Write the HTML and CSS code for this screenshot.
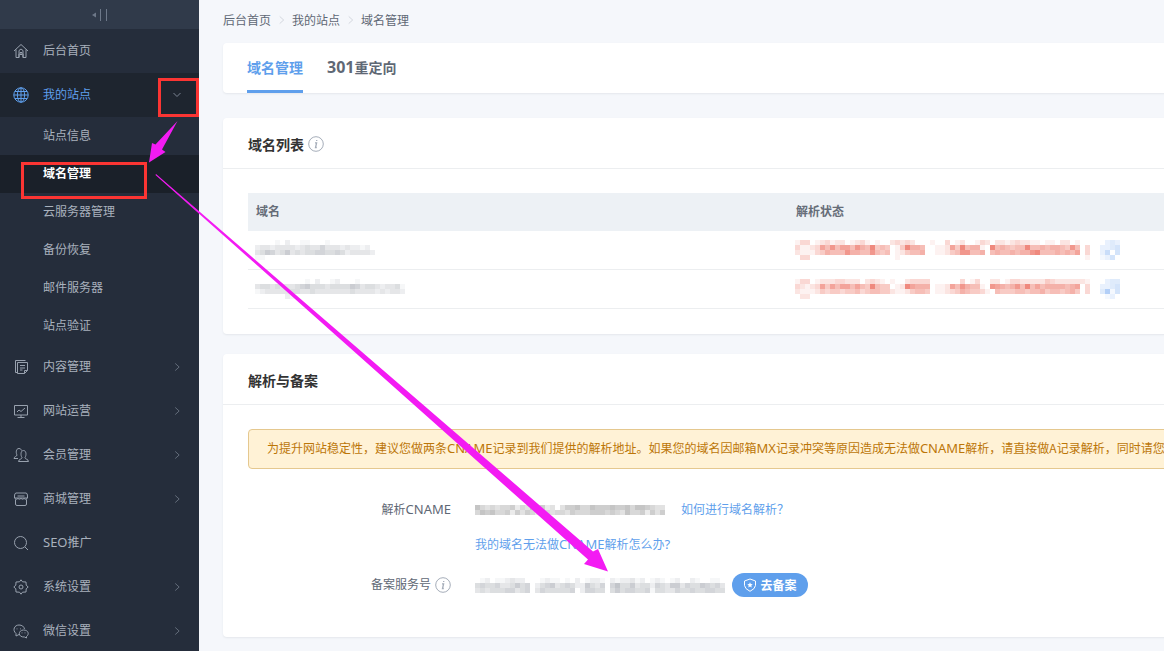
FILE: index.html
```html
<!DOCTYPE html>
<html lang="zh-CN">
<head>
<meta charset="utf-8">
<title>域名管理</title>
<link rel="stylesheet" href="styles.css">
</head>
<body>
<svg class="defs" aria-hidden="true">
  <symbol id="right" viewBox="0 0 12 14"><path d="M3.500 2 9 7l-5.500 5"/></symbol>
  <symbol id="info" viewBox="0 0 16 16"><circle cx="8" cy="8" r="7.300"/><path d="M7 6.800h1.600L7.500 11.500h1.300M8.700 4v1" stroke-width="1.300"/></symbol>
</svg>
<div class="app">
  <aside class="sidebar">
    <button class="collapse" type="button" aria-label="收起菜单">
      <svg width="16" height="12" viewBox="0 0 16 12"><path d="M4 3.500v5L0 6z" fill="#6d7889"/><path d="M8.500 0v12M14.500 0v12" stroke="#6d7889"/></svg>
    </button>
    <nav>
      <a class="item" href="#"><svg class="icon" viewBox="0 0 16 16"><path d="M1 8 8 1.500 15 8M3 6.500v8h3v-3.500M13 6.500v8h-3V11M6 14.500V7.500L8 6l2 1.500v7M7 9.500h2v2H7z"/></svg><span class="label">后台首页</span></a>
      <a class="item open" href="#"><svg class="icon" viewBox="0 0 16 16"><circle cx="8" cy="8" r="7.200"/><ellipse cx="8" cy="8" rx="3.600" ry="7.200"/><path d="M8 .8v14.400M.8 8h14.400M2 4.500h12M2 11.500h12"/></svg><span class="label">我的站点</span><svg class="chev-down" viewBox="0 0 12 14"><path d="M2.500 5 6 8.500 9.500 5"/></svg></a>
      <div class="submenu">
        <a class="sub" href="#">站点信息</a>
        <a class="sub current" href="#">域名管理</a>
        <a class="sub" href="#">云服务器管理</a>
        <a class="sub" href="#">备份恢复</a>
        <a class="sub" href="#">邮件服务器</a>
        <a class="sub" href="#">站点验证</a>
      </div>
      <a class="item" href="#"><svg class="icon" viewBox="0 0 16 16"><path d="M4.500 3.500h10v8l-3 3h-7zM14.500 11.500h-3v3M2.500 13.500v-12h10M4.500 13.500h-2M7 6.500h5M7 9h5M7 11h2.500"/></svg><span class="label">内容管理</span><svg class="chev"><use href="#right"/></svg></a>
      <a class="item" href="#"><svg class="icon" viewBox="0 0 16 16"><path d="M1.500 2.500h13v9.500h-13zM8 12v2.500M4.500 14.500h7M4 9l2-2 2 1.500L12 5"/></svg><span class="label">网站运营</span><svg class="chev"><use href="#right"/></svg></a>
      <a class="item" href="#"><svg class="icon" viewBox="0 0 16 16"><path d="M5 11.500H1c0-2 3-2 3-3.500C3 6.500 2.500 1.500 6 1.500c1.500 0 2.300 1 2.500 2M5.500 14.500c0-2.500 3.500-2 3.500-4C7.500 8.500 7.500 3.500 10.500 3.500s3 5 1.500 7c0 2 3.500 1.500 3.500 4z"/></svg><span class="label">会员管理</span><svg class="chev"><use href="#right"/></svg></a>
      <a class="item" href="#"><svg class="icon" viewBox="0 0 16 16"><path d="M3 2h10q1.500 0 1.500 3v2H1.500V5Q1.500 2 3 2zM4.500 5h7M2.500 8.500v4.500q0 1.500 1.500 1.500h8q1.500 0 1.500-1.500V8.500M1.500 7q1.500 2.500 3.500.500Q6 9 8 7.500q2 1.500 3 0 2 2 3.500-.5"/></svg><span class="label">商城管理</span><svg class="chev"><use href="#right"/></svg></a>
      <a class="item" href="#"><svg class="icon" viewBox="0 0 16 16"><circle cx="7.500" cy="7.500" r="6"/><path d="M12 12l3 3"/></svg><span class="label"><span class="latin">SEO</span>推广</span></a>
      <a class="item" href="#"><svg class="icon" viewBox="0 0 16 16"><path d="M8 .8 9.500 2.800 13 3l.2 3.200L15.200 8l-2 1.800L13 13l-3.500.2L8 15.200 6.500 13.200 3 13l-.2-3.200L.8 8l2-1.800L3 3l3.500-.2z"/><circle cx="8" cy="8" r="2"/></svg><span class="label">系统设置</span><svg class="chev"><use href="#right"/></svg></a>
      <a class="item" href="#"><svg class="icon" viewBox="0 0 16 16"><path d="M6 11.500 3 13v-2.500C-1 7 1.500 2 6 2c3 0 5 1.500 5.500 4M4 5.500v.8M7.500 5.500v.8"/><path d="M13.500 13.500V15l-2-1c-7 .5-6.500-7-1-7 5 0 6 4.500 3 6.500zM9 9.500v.8M12 9.500v.8"/></svg><span class="label">微信设置</span><svg class="chev"><use href="#right"/></svg></a>
    </nav>
  </aside>

  <main class="main">
    <nav class="crumbs" aria-label="面包屑">
      <a href="#">后台首页</a><svg class="sep"><use href="#right"/></svg><a href="#">我的站点</a><svg class="sep"><use href="#right"/></svg><a href="#">域名管理</a>
    </nav>

    <div class="card tabs">
      <a class="tab selected" href="#">域名管理</a>
      <a class="tab" href="#"><span class="digits">301</span>重定向</a>
    </div>

    <section class="card">
      <h2 class="title">域名列表<svg class="info"><use href="#info"/></svg></h2>
      <div class="body">
        <table class="table">
          <thead><tr><th>域名</th><th>解析状态</th></tr></thead>
          <tbody>
            <tr>
              <td><span class="mosaic grey" data-rows="000010200110001000000000 233233332343353332322120 346534634344554454233332 110000000000000000000000"></span></td>
              <td><span class="status"><span class="mosaic red" data-rows="13301231220123101002323200010030120013202212322110110220100 31123758577586594540149665001127495661095654559556566548503 21113465558665585450124556001124588556056556566895556565703 03300000000000000000100000000000000000000000000000000000001"></span><span class="mosaic blue" data-rows="0232 2234 2504 1240"></span></span></td>
            </tr>
            <tr>
              <td><span class="mosaic grey" data-rows="000000000010200120001000000000 344343334564443444465344323341 123333344334333333343333232332 000000210000000000000000000000"></span></td>
              <td><span class="status"><span class="mosaic red" data-rows="13301222332220232101002333300000030130022013322222432222221 32123747577575495440129766601127586551087656859575666656703 21112434434453455442112455401123465443105444554556455456403 02200000000000000000000000000000000000000000000000000000000"></span><span class="mosaic blue" data-rows="0233 2234 3714 0120"></span></span></td>
            </tr>
          </tbody>
        </table>
      </div>
    </section>

    <section class="card records">
      <h2 class="title">解析与备案</h2>
      <div class="body">
        <p class="alert">为提升网站稳定性，建议您做两条<span class="latin">CNAME</span>记录到我们提供的解析地址。如果您的域名因邮箱<span class="latin">MX</span>记录冲突等原因造成无法做<span class="latin">CNAME</span>解析，请直接做A记录解析，同时请您</p>
        <dl class="form">
          <dt><span class="text">解析<span class="latin">CNAME</span></span></dt>
          <dd><span class="mosaic dark cname" data-rows="64343445243635230355644655565564665433 46564452535426434435444555454364452535"></span><a class="link text" href="#">如何进行域名解析？</a></dd>
          <dd class="only"><a class="link text" href="#">我的域名无法做<span class="latin">CNAME</span>解析怎么办<span class="latin">?</span></a></dd>
          <dt><span class="text">备案服务号</span><svg class="info"><use href="#info"/></svg></dt>
          <dd class="tall"><span class="mosaic grey service" data-rows="01201123220001211010201221021223120121012002100110 45445334645024563454226435057446344254366354465453 34344455345035444445025544046455445144335445445544"></span><button class="filing" type="button"><svg width="14" height="14" viewBox="0 0 14 14"><path d="M7 1 12.500 3v4.500Q12 11 7 13.300 2 11 1.500 7.500V3z"/><path d="m7 4.300.8 1.700 1.900.2-1.400 1.300.4 1.900L7 8.500l-1.700.9.4-1.900-1.400-1.300 1.900-.2z" fill="#fff" stroke="none"/></svg>去备案</button></dd>
        </dl>
      </div>
    </section>
  </main>

  <svg class="marks" width="700" height="651" viewBox="0 0 700 651" aria-hidden="true">
    <g fill="none" stroke="#fb3533" stroke-width="3"><rect x="159.500" y="79.500" width="38" height="36"/><rect x="22.500" y="163.500" width="123" height="34"/></g>
    <g fill="#f31bf3"><path d="M177.500 121 162 149.500l3.500 2.500-16.500 10.500 3-19.500 3.500 1.500z"/><path d="M156 174 593 551.500l5-2.500 10 22.500-24-7.500 4-4.500L155.500 175z"/></g>
  </svg>
</div>
<script src="mosaic.js"></script>
</body>
</html>
```

FILE: styles.css
```css
* { box-sizing: border-box; }
body {
  margin: 0;
  background: #f5f7fb;
  color: #5f6875;
  font: 12px/18px "Noto Sans CJK SC", "Noto Sans", sans-serif;
}
a { color: inherit; text-decoration: none; }
button { border: 0; padding: 0; font: inherit; cursor: pointer; }
svg { fill: none; stroke-width: 1; flex: none; }
.defs { position: absolute; width: 0; height: 0; }
.latin { font-family: "Noto Sans", sans-serif; font-size: 13px; }
.digits { font-family: "Noto Sans", sans-serif; font-size: 16px; }

.app { position: relative; display: flex; height: 100vh; overflow: hidden; }

.sidebar { flex: none; width: 199px; background: #252d3b; color: #a9b1bd; }
.collapse { display: flex; align-items: center; justify-content: center; width: 100%; height: 29px; background: #303a4a; }
.item { display: flex; align-items: center; height: 44px; padding: 0 16px 0 13px; }
.icon { width: 16px; height: 16px; margin-right: 14px; stroke: #98a1ae; }
.label { flex: 1; padding-bottom: 2px; }
.chev { width: 12px; height: 10px; stroke: #7b8493; }
.chev-down { width: 12px; height: 14px; stroke: #7b8493; }
.open { background: #1e252f; color: #5f9fec; }
.open .icon { stroke: #5f9fec; }
.sub { display: flex; align-items: center; height: 38px; padding: 0 0 2px 43px; }
.current { background: #1a2029; color: #fff; font-weight: 700; }

.main { flex: 1; min-width: 0; padding-left: 24px; }
.crumbs { display: flex; align-items: center; height: 43px; padding-bottom: 3px; }
.sep { width: 9px; height: 10px; margin: 0 6px; stroke: #c5cad2; }

.card { min-width: 1130px; margin-bottom: 20px; background: #fff; border-radius: 4px; box-shadow: 0 1px 2px #e4e7ec; }
.tabs { display: flex; gap: 24px; height: 50px; margin-bottom: 25px; padding: 0 24px; font-size: 14px; font-weight: 700; }
.tab { display: flex; align-items: center; border-bottom: 3px solid transparent; }
.selected { color: #5f9fec; border-color: #5f9fec; }
.title { display: flex; align-items: center; gap: 4px; height: 51px; margin: 0; padding: 1px 25px 0; border-bottom: 1px solid #eceef0; color: #333; font-size: 14px; }
.info { width: 16px; height: 16px; stroke: #a5adb9; }
.body { padding: 24px 25px 25px; }

.table { width: 100%; table-layout: fixed; border-collapse: separate; border-spacing: 0; }
.table th { height: 38px; padding: 0 8px 2px; background: #edf1f5; text-align: left; color: #666d78; }
.table td { height: 39px; padding: 0 7px; border-bottom: 1px solid #eceef0; }
.status { display: flex; gap: 10px; }
.mosaic, .mosaic svg { display: block; }
.mosaic svg { fill: currentColor; }
.grey { color: #9297a0; }
.dark { color: #858585; }
.red { color: #e95c4c; }
.blue { color: #78aaf0; }

.alert { margin: 0; padding: 8px 18px 10px; border: 1px solid #e5c88f; border-radius: 4px; background: #fff2d6; color: #bc7608; line-height: 19px; white-space: nowrap; }
.form { display: grid; grid-template-columns: 203px 1fr; column-gap: 24px; margin: 24px 0 0; }
.form dt { display: flex; align-items: center; justify-content: flex-end; gap: 4px; }
.form dd { display: flex; align-items: center; height: 34px; margin: 0; }
.text { padding-bottom: 2px; }
.form .only { grid-column: 2; height: 36px; }
.form .tall { height: 44px; }
.records .body { padding-bottom: 30px; }
.link { color: #5f9fec; }
.cname { margin-right: 16px; }
.service { margin-right: 7px; }
.filing { display: flex; align-items: center; justify-content: center; gap: 3px; width: 76px; height: 24px; border-radius: 12px; background: #5f9fec; color: #fff; font-weight: 700; }
.filing svg { stroke: #fff; }

.marks { position: absolute; left: 0; top: 0; pointer-events: none; }
```

FILE: mosaic.js
```js
// Draws censored values as 5px tiles; each digit is a tile's strength.
const CELL = 5;

document.querySelectorAll(".mosaic").forEach(el => {
  const rows = el.dataset.rows.split(" ");
  const w = rows[0].length * CELL;
  const h = rows.length * CELL;
  let out = "";
  rows.forEach((row, y) => [...row].forEach((n, x) => {
    if (n !== "0") out += `<rect x="${x * CELL}" y="${y * CELL}" width="${CELL}" height="${CELL}" opacity="${n * 0.08}"/>`;
  }));
  el.innerHTML = `<svg width="${w}" height="${h}" shape-rendering="crispEdges">${out}</svg>`;
});
```
